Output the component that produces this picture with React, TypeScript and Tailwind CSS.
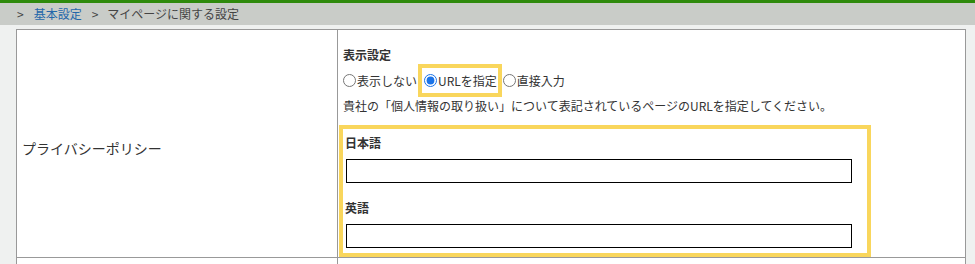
import React from "react";

export default function App() {
  return (
    <div
      className="w-[975px] h-[264px] overflow-hidden bg-[#eff1f0] text-[#333]"
      style={{ fontFamily: '"Noto Sans CJK JP", "Noto Sans", sans-serif' }}
    >
      <div className="h-[3px] bg-[#2e8a0c]" />
      <div className="h-[22px] bg-[#c9ccc8] flex items-center pl-[17px] text-[12px] leading-[18px] text-[#444]">
        <span>&gt;</span>
        <a className="ml-[10px] text-[#2467aa]">基本設定</a>
        <span className="ml-[10px]">&gt;</span>
        <span className="ml-[9px]">マイページに関する設定</span>
      </div>
      <div className="pt-[4px] pl-[16px] pr-[9px]">
        <div className="bg-white border-t border-l border-r border-[#999]">
          <div className="flex border-b border-[#999]">
            <div className="w-[321px] shrink-0 border-r border-[#999] flex items-center pl-[5px] pt-[8px] text-[14px] leading-[20px]">
              プライバシーポリシー
            </div>
            <div className="flex-1 text-[12px] leading-[18px]">
              <div className="pl-[5px] pt-[16px]">
                <div className="font-bold">表示設定</div>
                <div className="flex items-center leading-[19px]">
                  <label className="flex items-center">
                    <input type="radio" name="disp" className="m-0 w-[13px] h-[13px] mr-[1px]" />
                    <span>表示しない</span>
                  </label>
                  <label className="flex items-center border-4 border-[#f9d65c] ml-[1px] pl-[2px] pr-[1px] py-[3px]">
                    <input type="radio" name="disp" defaultChecked className="m-0 w-[13px] h-[13px] mr-[1px] accent-[#1a73e8]" />
                    <span>URLを指定</span>
                  </label>
                  <label className="flex items-center ml-[1px]">
                    <input type="radio" name="disp" className="m-0 w-[13px] h-[13px] mr-[1px]" />
                    <span>直接入力</span>
                  </label>
                </div>
                <div>貴社の「個人情報の取り扱い」について表記されているページのURLを指定してください。</div>
              </div>
              <div className="mt-[10px] ml-[1px] w-[532px] border-4 border-[#f9d65c] pt-[5px] pb-[5px]">
                <div className="pl-[2px] font-bold">日本語</div>
                <input
                  type="text"
                  className="block ml-[3px] mt-[7px] w-[506px] h-[24px] border border-black bg-white outline-none"
                />
                <div className="pl-[2px] mt-[16px] font-bold">英語</div>
                <input
                  type="text"
                  className="block ml-[3px] mt-[7px] w-[506px] h-[24px] border border-black bg-white outline-none"
                />
              </div>
            </div>
          </div>
          <div className="flex h-[20px]">
            <div className="w-[321px] shrink-0 border-r border-[#999]" />
            <div className="flex-1" />
          </div>
        </div>
      </div>
    </div>
  );
}
